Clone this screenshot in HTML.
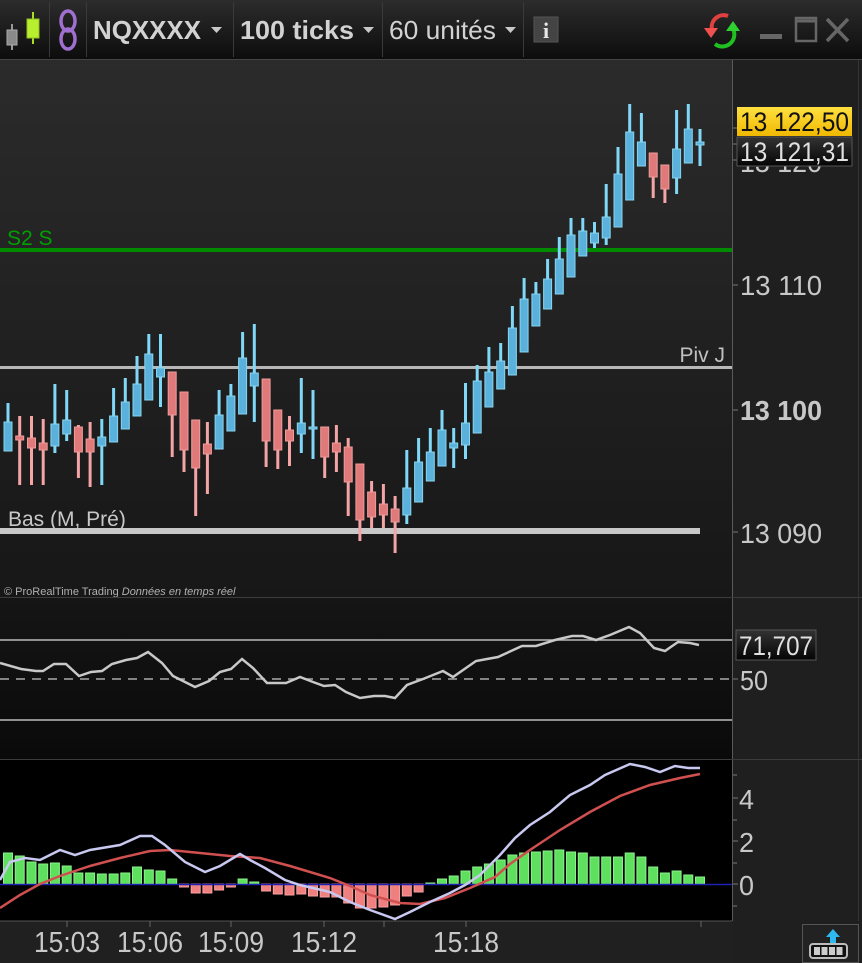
<!DOCTYPE html>
<html><head><meta charset="utf-8"><style>
html,body{margin:0;padding:0;background:#1e1e1e;width:862px;height:963px;overflow:hidden}
svg{display:block;font-family:"Liberation Sans",sans-serif}
</style></head><body>
<svg width="862" height="963" viewBox="0 0 862 963" xmlns="http://www.w3.org/2000/svg">
<defs>
<linearGradient id="tb" x1="0" y1="0" x2="0" y2="1"><stop offset="0" stop-color="#2c2c2c"/><stop offset="1" stop-color="#0c0c0c"/></linearGradient>
<linearGradient id="mc" x1="0" y1="0" x2="0" y2="1"><stop offset="0" stop-color="#2b2b2b"/><stop offset="1" stop-color="#171717"/></linearGradient>
<linearGradient id="rs" x1="0" y1="0" x2="0" y2="1"><stop offset="0" stop-color="#151515"/><stop offset="1" stop-color="#0a0a0a"/></linearGradient>
<linearGradient id="yl" x1="0" y1="0" x2="0" y2="1"><stop offset="0" stop-color="#ffe040"/><stop offset="1" stop-color="#f0b800"/></linearGradient>
<linearGradient id="dk" x1="0" y1="0" x2="0" y2="1"><stop offset="0" stop-color="#333"/><stop offset="1" stop-color="#050505"/></linearGradient>
</defs>
<!-- toolbar -->
<rect x="0" y="0" width="862" height="60" fill="url(#tb)"/>
<line x1="0" y1="59.5" x2="862" y2="59.5" stroke="#444"/>
<g stroke="#3a3a3a" stroke-width="1">
<line x1="49.5" y1="2" x2="49.5" y2="57"/><line x1="86.5" y1="2" x2="86.5" y2="57"/>
<line x1="233.5" y1="2" x2="233.5" y2="57"/><line x1="382.5" y1="2" x2="382.5" y2="57"/>
<line x1="523.5" y1="2" x2="523.5" y2="57"/>
</g>
<line x1="12" y1="24" x2="12" y2="50" stroke="#999" stroke-width="2"/>
<rect x="7" y="30" width="10" height="15" fill="#8a8a8a" stroke="#aaa"/>
<line x1="33" y1="12" x2="33" y2="44" stroke="#a8e020" stroke-width="2"/>
<rect x="27" y="19" width="12" height="19" fill="#b8f030" stroke="#90c020"/>
<g fill="none" stroke="#a070d0" stroke-width="3.5">
<ellipse cx="68" cy="21" rx="7" ry="10"/><ellipse cx="68" cy="39" rx="7" ry="10"/>
</g>
<text x="93" y="39" fill="#d2d2d2" font-size="26" font-weight="bold" textLength="108" lengthAdjust="spacingAndGlyphs">NQXXXX</text>
<path d="M211 27h11l-5.5 6z" fill="#c8c8c8"/>
<text x="240" y="39" fill="#d2d2d2" font-size="26" font-weight="bold" textLength="114" lengthAdjust="spacingAndGlyphs">100 ticks</text>
<path d="M363 27h11l-5.5 6z" fill="#c8c8c8"/>
<text x="389" y="39" fill="#d2d2d2" font-size="26" textLength="107" lengthAdjust="spacingAndGlyphs">60 unités</text>
<path d="M505 27h11l-5.5 6z" fill="#c8c8c8"/>
<rect x="534" y="17" width="24" height="25" fill="#444" stroke="#555"/>
<text x="546" y="38" fill="#e8e8e8" font-size="22" font-weight="bold" font-family="Liberation Serif,serif" text-anchor="middle">i</text>
<path d="M728 16 a12 12 0 0 0 -16 14" fill="none" stroke="#e04040" stroke-width="4"/>
<path d="M704 28h14l-7 10z" fill="#f05050"/>
<path d="M715 44 a12 12 0 0 0 18 -15" fill="none" stroke="#20c020" stroke-width="4"/>
<path d="M726 31h14l-7 -10z" fill="#30d030"/>
<rect x="760" y="34" width="22" height="5" fill="#666"/>
<rect x="796" y="18" width="20" height="23" fill="none" stroke="#666" stroke-width="2.5"/>
<line x1="796" y1="21" x2="816" y2="21" stroke="#666" stroke-width="3"/>
<path d="M827 19l21 22M848 19l-21 22" stroke="#666" stroke-width="3.5"/>

<!-- main chart -->
<rect x="0" y="60" width="732" height="538" fill="url(#mc)"/>
<rect x="733" y="60" width="129" height="903" fill="#1f1f1f"/>
<line x1="732.5" y1="60" x2="732.5" y2="921" stroke="#5a5a5a"/>
<line x1="858.5" y1="60" x2="858.5" y2="921" stroke="#333"/>
<rect x="0" y="248" width="732" height="4" fill="#008a00"/>
<text x="7" y="245" fill="#00a000" font-size="21">S2 S</text>
<rect x="0" y="366" width="732" height="3" fill="#b8b8b8"/>
<text x="725" y="362" fill="#c0c0c0" font-size="21" text-anchor="end">Piv J</text>
<rect x="0" y="528" width="700" height="6" fill="#c8c8c8"/>
<text x="8" y="526" fill="#c8c8c8" font-size="21">Bas (M, Pré)</text>
<text x="4" y="595" fill="#b0b0b0" font-size="11">© ProRealTime Trading <tspan font-style="italic">Données en temps réel</tspan></text>

<g>
<g stroke="#80d8f8" stroke-width="3">
<line x1="8" y1="403" x2="8" y2="451"/><line x1="54.9" y1="384" x2="54.9" y2="453"/><line x1="66.7" y1="390" x2="66.7" y2="441"/><line x1="101.8" y1="419" x2="101.8" y2="485"/><line x1="113.6" y1="388" x2="113.6" y2="442"/><line x1="125.3" y1="378" x2="125.3" y2="429"/><line x1="137" y1="356" x2="137" y2="416"/><line x1="148.8" y1="334" x2="148.8" y2="400"/><line x1="160.5" y1="334" x2="160.5" y2="407"/><line x1="219.1" y1="390" x2="219.1" y2="449"/><line x1="230.9" y1="384" x2="230.9" y2="431"/><line x1="242.6" y1="332" x2="242.6" y2="414"/><line x1="254.3" y1="324" x2="254.3" y2="422"/><line x1="301.3" y1="378" x2="301.3" y2="453"/><line x1="313" y1="390" x2="313" y2="459"/>
<line x1="406.8" y1="450" x2="406.8" y2="524"/><line x1="418.6" y1="438" x2="418.6" y2="502"/><line x1="430.3" y1="428" x2="430.3" y2="481"/><line x1="442" y1="410" x2="442" y2="466"/><line x1="453.7" y1="428" x2="453.7" y2="468"/><line x1="465.5" y1="383" x2="465.5" y2="459"/><line x1="477.2" y1="365" x2="477.2" y2="433"/><line x1="488.9" y1="347" x2="488.9" y2="407"/><line x1="500.7" y1="343" x2="500.7" y2="389"/><line x1="512.4" y1="306" x2="512.4" y2="375"/><line x1="524.1" y1="278" x2="524.1" y2="352"/><line x1="535.9" y1="282" x2="535.9" y2="326"/><line x1="547.6" y1="259" x2="547.6" y2="309"/><line x1="559.3" y1="237" x2="559.3" y2="294"/><line x1="571" y1="218" x2="571" y2="277"/><line x1="582.8" y1="218" x2="582.8" y2="256"/><line x1="594.5" y1="222" x2="594.5" y2="248"/><line x1="606.2" y1="184" x2="606.2" y2="245"/><line x1="618" y1="147" x2="618" y2="227"/><line x1="629.7" y1="104" x2="629.7" y2="200"/><line x1="641.4" y1="113" x2="641.4" y2="166"/><line x1="676.6" y1="110" x2="676.6" y2="194"/><line x1="688.3" y1="104" x2="688.3" y2="163"/><line x1="700" y1="129" x2="700" y2="166"/>
</g>
<g fill="#5ab2dc" stroke="#88d4f0" stroke-width="1">
<rect x="4" y="422" width="8" height="29"/><rect x="50.9" y="424" width="8" height="22"/><rect x="62.7" y="420" width="8" height="14"/><rect x="97.8" y="437" width="8" height="9"/><rect x="109.6" y="416" width="8" height="26"/><rect x="121.3" y="402" width="8" height="27"/><rect x="133" y="384" width="8" height="32"/><rect x="144.8" y="354" width="8" height="46"/><rect x="156.5" y="368" width="8" height="9"/><rect x="215.1" y="415" width="8" height="34"/><rect x="226.9" y="396" width="8" height="35"/><rect x="238.6" y="358" width="8" height="56"/><rect x="250.3" y="373" width="8" height="13"/><rect x="297.3" y="423" width="8" height="11"/><rect x="309" y="427" width="8" height="2"/>
<rect x="402.8" y="488" width="8" height="27"/><rect x="414.6" y="462" width="8" height="40"/><rect x="426.3" y="452" width="8" height="29"/><rect x="438" y="430" width="8" height="36"/><rect x="449.7" y="443" width="8" height="5"/><rect x="461.5" y="423" width="8" height="22"/><rect x="473.2" y="381" width="8" height="52"/><rect x="484.9" y="372" width="8" height="35"/><rect x="496.7" y="361" width="8" height="28"/><rect x="508.4" y="328" width="8" height="47"/><rect x="520.1" y="299" width="8" height="53"/><rect x="531.9" y="294" width="8" height="32"/><rect x="543.6" y="279" width="8" height="30"/><rect x="555.3" y="259" width="8" height="35"/><rect x="567" y="235" width="8" height="42"/><rect x="578.8" y="231" width="8" height="25"/><rect x="590.5" y="233" width="8" height="10"/><rect x="602.2" y="217" width="8" height="21"/><rect x="614" y="174" width="8" height="53"/><rect x="625.7" y="132" width="8" height="68"/><rect x="637.4" y="142" width="8" height="24"/><rect x="672.6" y="149" width="8" height="29"/><rect x="684.3" y="129" width="8" height="34"/><rect x="696" y="142" width="8" height="3"/>
</g>
<g stroke="#f4a4a4" stroke-width="3">
<line x1="19.7" y1="416" x2="19.7" y2="485"/><line x1="31.5" y1="416" x2="31.5" y2="485"/><line x1="43.2" y1="419" x2="43.2" y2="485"/><line x1="78.4" y1="425" x2="78.4" y2="478"/><line x1="90.1" y1="422" x2="90.1" y2="487"/><line x1="172.2" y1="372" x2="172.2" y2="457"/><line x1="184" y1="392" x2="184" y2="472"/><line x1="195.7" y1="420" x2="195.7" y2="516"/><line x1="207.4" y1="422" x2="207.4" y2="494"/><line x1="266.1" y1="379" x2="266.1" y2="467"/><line x1="277.8" y1="410" x2="277.8" y2="469"/><line x1="289.5" y1="416" x2="289.5" y2="466"/><line x1="324.7" y1="427" x2="324.7" y2="478"/><line x1="336.4" y1="425" x2="336.4" y2="472"/><line x1="348.2" y1="438" x2="348.2" y2="516"/><line x1="359.9" y1="464" x2="359.9" y2="541"/><line x1="371.6" y1="481" x2="371.6" y2="528"/><line x1="383.4" y1="484" x2="383.4" y2="528"/><line x1="395.1" y1="496" x2="395.1" y2="553"/><line x1="653.2" y1="153" x2="653.2" y2="198"/><line x1="664.9" y1="165" x2="664.9" y2="203"/>
</g>
<g fill="#e07a7a" stroke="#f09a9a" stroke-width="1">
<rect x="15.7" y="436" width="8" height="4"/><rect x="27.5" y="438" width="8" height="10"/><rect x="39.2" y="443" width="8" height="7"/><rect x="74.4" y="427" width="8" height="25"/><rect x="86.1" y="439" width="8" height="13"/><rect x="168.2" y="372" width="8" height="43"/><rect x="180" y="392" width="8" height="58"/><rect x="191.7" y="420" width="8" height="48"/><rect x="203.4" y="444" width="8" height="10"/><rect x="262.1" y="379" width="8" height="62"/><rect x="273.8" y="410" width="8" height="40"/><rect x="285.5" y="430" width="8" height="11"/><rect x="320.7" y="427" width="8" height="30"/><rect x="332.4" y="443" width="8" height="9"/><rect x="344.2" y="447" width="8" height="35"/><rect x="355.9" y="464" width="8" height="56"/><rect x="367.6" y="492" width="8" height="25"/><rect x="379.4" y="504" width="8" height="11"/><rect x="391.1" y="509" width="8" height="13"/><rect x="649.2" y="153" width="8" height="24"/><rect x="660.9" y="165" width="8" height="24"/>
</g>
</g>

<g stroke="#777"><line x1="733" y1="128" x2="738" y2="128"/><line x1="733" y1="144" x2="738" y2="144"/><line x1="733" y1="160" x2="738" y2="160"/><line x1="733" y1="285" x2="738" y2="285"/><line x1="733" y1="410" x2="738" y2="410"/><line x1="733" y1="532" x2="738" y2="532"/></g>
<g font-size="28" fill="#c8c8c8">
<text x="740" y="172" textLength="82" lengthAdjust="spacingAndGlyphs">13 120</text>
<text x="740" y="295" textLength="82" lengthAdjust="spacingAndGlyphs">13 110</text>
<text x="740" y="420" font-weight="bold" textLength="82" lengthAdjust="spacingAndGlyphs">13 100</text>
<text x="740" y="543" textLength="82" lengthAdjust="spacingAndGlyphs">13 090</text>
</g>
<rect x="737" y="137" width="115" height="29" fill="url(#dk)" stroke="#555"/>
<text x="740" y="161" fill="#e0e0e0" font-size="27" textLength="109" lengthAdjust="spacingAndGlyphs">13 121,31</text>
<rect x="737" y="107" width="115" height="29" fill="url(#yl)"/>
<text x="740" y="131" fill="#111" font-size="27" textLength="109" lengthAdjust="spacingAndGlyphs">13 122,50</text>

<!-- RSI -->
<line x1="0" y1="597.5" x2="862" y2="597.5" stroke="#3c3c3c"/>
<rect x="0" y="598" width="732" height="161" fill="url(#rs)"/>
<line x1="0" y1="640" x2="732" y2="640" stroke="#bbb" stroke-width="1.5"/>
<line x1="0" y1="720" x2="732" y2="720" stroke="#bbb" stroke-width="1.5"/>
<line x1="0" y1="679" x2="732" y2="679" stroke="#aaa" stroke-width="1.5" stroke-dasharray="9,7"/>
<polyline fill="none" stroke="#c8c8c8" stroke-width="2.5" points="0,663 21,669 36,671 43,671 54,664 66,664 79,676 91,672 102,671 112,664 126,660 137,658 148,652 162,663 173,676 187,683 195,687 209,681 220,672 231,669 242,659 253,668 267,683 286,683 300,677 313,682 324,686 335,685 346,692 360,698 374,696 385,696 395,698 407,685 423,679 443,671 453,677 476,661 487,659 498,657 522,646 536,646 555,640 572,636 583,636 596,640 610,635 629,627 640,633 654,648 665,651 678,642 690,643 699,645"/>
<line x1="733" y1="679" x2="738" y2="679" stroke="#777"/>
<text x="740" y="690" fill="#c8c8c8" font-size="28" textLength="28" lengthAdjust="spacingAndGlyphs">50</text>
<rect x="736" y="630" width="80" height="30" fill="url(#dk)" stroke="#555"/>
<text x="739" y="655" fill="#e0e0e0" font-size="27" textLength="74" lengthAdjust="spacingAndGlyphs">71,707</text>

<!-- MACD -->
<line x1="0" y1="759.5" x2="862" y2="759.5" stroke="#3c3c3c"/>
<rect x="0" y="760" width="732" height="161" fill="#000"/>
<g fill="#5ee05e" stroke="#8cf08c" stroke-width="1">
<rect x="3.5" y="853" width="9" height="31"/><rect x="15.2" y="856" width="9" height="28"/><rect x="27" y="862" width="9" height="22"/><rect x="38.7" y="864" width="9" height="20"/><rect x="50.4" y="863" width="9" height="21"/><rect x="62.2" y="866" width="9" height="18"/><rect x="73.9" y="873" width="9" height="11"/><rect x="85.6" y="873" width="9" height="11"/><rect x="97.3" y="874" width="9" height="10"/><rect x="109.1" y="874" width="9" height="10"/><rect x="120.8" y="873" width="9" height="11"/><rect x="132.5" y="867" width="9" height="17"/><rect x="144.3" y="870" width="9" height="14"/><rect x="156" y="871" width="9" height="13"/><rect x="167.7" y="879" width="9" height="5"/><rect x="238.1" y="879" width="9" height="5"/><rect x="249.8" y="882" width="9" height="2"/>
<rect x="425.8" y="883" width="9" height="1"/><rect x="437.5" y="879" width="9" height="5"/><rect x="449.2" y="876" width="9" height="8"/><rect x="461" y="871" width="9" height="13"/><rect x="472.7" y="867" width="9" height="17"/><rect x="484.4" y="864" width="9" height="20"/><rect x="496.2" y="860" width="9" height="24"/><rect x="507.9" y="855" width="9" height="29"/><rect x="519.6" y="853" width="9" height="31"/><rect x="531.4" y="852" width="9" height="32"/><rect x="543.1" y="851" width="9" height="33"/><rect x="554.8" y="850" width="9" height="34"/><rect x="566.5" y="852" width="9" height="32"/><rect x="578.3" y="853" width="9" height="31"/><rect x="590" y="857" width="9" height="27"/><rect x="601.7" y="857" width="9" height="27"/><rect x="613.5" y="857" width="9" height="27"/><rect x="625.2" y="853" width="9" height="31"/><rect x="636.9" y="857" width="9" height="27"/><rect x="648.7" y="867" width="9" height="17"/><rect x="660.4" y="873" width="9" height="11"/><rect x="672.1" y="871" width="9" height="13"/><rect x="683.8" y="875" width="9" height="9"/><rect x="695.5" y="877" width="9" height="7"/>
</g>
<g fill="#f08080" stroke="#f8a0a0" stroke-width="1">
<rect x="179.5" y="884" width="9" height="3"/><rect x="191.2" y="884" width="9" height="9"/><rect x="202.9" y="884" width="9" height="9"/><rect x="214.6" y="884" width="9" height="6"/><rect x="226.4" y="884" width="9" height="3"/>
<rect x="261.6" y="884" width="9" height="7"/><rect x="273.3" y="884" width="9" height="10"/><rect x="285" y="884" width="9" height="11"/><rect x="296.8" y="884" width="9" height="10"/><rect x="308.5" y="884" width="9" height="12"/><rect x="320.2" y="884" width="9" height="13"/><rect x="331.9" y="884" width="9" height="13"/><rect x="343.7" y="884" width="9" height="19"/><rect x="355.4" y="884" width="9" height="24"/><rect x="367.1" y="884" width="9" height="24"/><rect x="378.9" y="884" width="9" height="23"/><rect x="390.6" y="884" width="9" height="21"/><rect x="402.3" y="884" width="9" height="12"/><rect x="414.1" y="884" width="9" height="8"/>
</g>
<line x1="0" y1="884.5" x2="732" y2="884.5" stroke="#2020b0" stroke-width="1.5"/>
<polyline fill="none" stroke="#d05050" stroke-width="2.5" points="0,908 20,895 40,884 60,876 90,866 120,858 150,851 170,850 200,853 230,856 260,858 290,866 310,872 330,878 350,886 370,895 400,903 420,904 445,898 470,888 495,877 510,864 530,850 560,830 590,812 620,796 650,785 680,778 700,774"/>
<polyline fill="none" stroke="#c8c8f0" stroke-width="2.5" points="0,880 10,862 25,858 40,860 60,850 75,855 90,850 120,845 140,836 152,836 165,845 185,862 205,872 220,866 240,854 250,860 265,868 285,880 300,885 330,892 350,902 370,910 395,919 410,912 430,902 450,893 465,885 480,875 500,855 515,838 530,825 550,812 570,795 590,785 605,775 630,764 645,767 660,772 675,766 688,768 700,768"/>
<g stroke="#777"><line x1="733" y1="775" x2="737" y2="775"/><line x1="733" y1="798" x2="738" y2="798"/><line x1="733" y1="820" x2="737" y2="820"/><line x1="733" y1="841" x2="738" y2="841"/><line x1="733" y1="863" x2="737" y2="863"/><line x1="733" y1="884" x2="738" y2="884"/><line x1="733" y1="906" x2="737" y2="906"/></g>
<g fill="#c8c8c8" font-size="28">
<text x="739" y="809" textLength="15" lengthAdjust="spacingAndGlyphs">4</text>
<text x="739" y="852" textLength="15" lengthAdjust="spacingAndGlyphs">2</text>
<text x="739" y="895" textLength="15" lengthAdjust="spacingAndGlyphs">0</text>
</g>

<!-- time axis -->
<rect x="0" y="921" width="733" height="42" fill="#202020"/>
<line x1="0" y1="921" x2="732" y2="921" stroke="#555"/>
<g stroke="#666"><line x1="67" y1="921" x2="67" y2="927"/><line x1="150" y1="921" x2="150" y2="927"/><line x1="231" y1="921" x2="231" y2="927"/><line x1="324" y1="921" x2="324" y2="927"/><line x1="384" y1="921" x2="384" y2="927"/><line x1="466" y1="921" x2="466" y2="927"/><line x1="701" y1="921" x2="701" y2="927"/></g>
<g fill="#c8c8c8" font-size="29" text-anchor="middle">
<text x="67" y="952" textLength="66" lengthAdjust="spacingAndGlyphs">15:03</text><text x="150" y="952" textLength="66" lengthAdjust="spacingAndGlyphs">15:06</text><text x="231" y="952" textLength="66" lengthAdjust="spacingAndGlyphs">15:09</text><text x="324" y="952" textLength="66" lengthAdjust="spacingAndGlyphs">15:12</text><text x="466" y="952" textLength="66" lengthAdjust="spacingAndGlyphs">15:18</text>
</g>
<rect x="802.5" y="924.5" width="56" height="38" fill="#222" stroke="#555"/>
<path d="M833 929l-7 8h4v8h6v-8h4z" fill="#30b8f0"/>
<rect x="810" y="944" width="37" height="14" rx="3" fill="#111" stroke="#bbb" stroke-width="2"/>
<g fill="#ccc"><rect x="814" y="947" width="6" height="8"/><rect x="821.5" y="947" width="6" height="8"/><rect x="829" y="947" width="6" height="8"/><rect x="836.5" y="947" width="6" height="8"/></g>
</svg>
</body></html>
